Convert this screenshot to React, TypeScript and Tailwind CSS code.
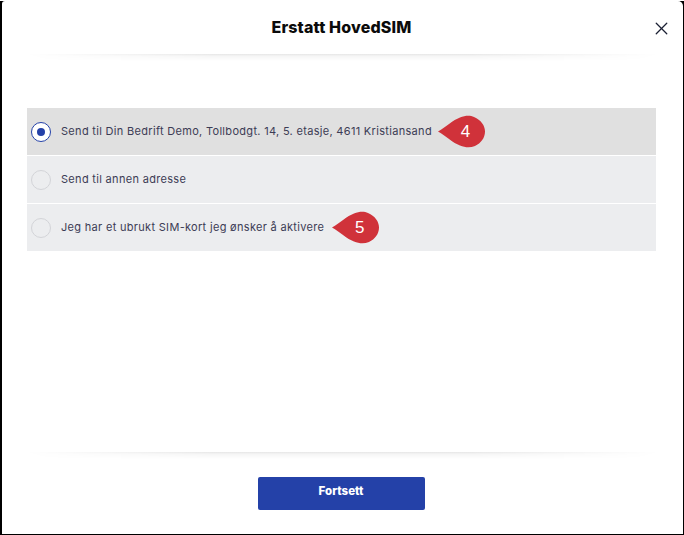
import React from 'react';
import { X } from 'lucide-react';

const options = [
    { label: 'Send til Din Bedrift Demo, Tollbodgt. 14, 5. etasje, 4611 Kristiansand', selected: true, pin: '4', gap: 'ml-[6px]' },
    { label: 'Send til annen adresse', selected: false, pin: null, gap: '' },
    { label: 'Jeg har et ubrukt SIM-kort jeg ønsker å aktivere', selected: false, pin: '5', gap: 'ml-[8px]' },
];

const Pin: React.FC<{ n: string }> = ({ n }) => (
    <div className="relative w-[47px] h-[33px] shrink-0">
        <svg width="47" height="33" viewBox="0 0 47 33" className="block">
            <path d="M0 16.5 C8 12 15 5 22 2.5 C27 0.5 32 0 36 2 C43 5 47 10.5 47 16.5 C47 23 43 28 37 31 C32 33 27 32.5 22 30.5 C15 28 8 21 0 16.5 Z" fill="#d0323a" />
        </svg>
        <span className="absolute left-[19px] top-0 w-[17px] h-[33px] flex items-center justify-center text-[17px] text-white font-['Liberation_Sans',sans-serif]">{n}</span>
    </div>
);

const Divider: React.FC = () => (
    <div className="h-[8px] mx-[24px] bg-[linear-gradient(to_bottom,#e6e6e6_0px,#f5f5f5_2px,#ffffff_7px)] [mask-image:linear-gradient(to_right,transparent,black_30%,black_70%,transparent)]" />
);

export default function App() {
    return (
        <div className="w-[684px] h-[535px] bg-black font-['Inter',sans-serif]">
            <div className="w-[681px] h-[533px] ml-[2px] mt-px rounded-tr-[5px] rounded-tl-[3px] bg-white flex flex-col">
                {/* Header */}
                <div className="h-[53px] shrink-0 relative flex items-center justify-center pb-[1px] pr-[2px]">
                    <h1 className="text-[16px] font-extrabold text-[#0b0b0b] tracking-[0.15px] leading-none">Erstatt HovedSIM</h1>
                    <button className="absolute left-[649px] top-[17px] text-[#1a2033]">
                        <X size={21} strokeWidth={1.5} className="block" />
                    </button>
                </div>
                <Divider />

                {/* Options */}
                <div className="flex-1 px-[25px] pt-[46px]">
                    <div className="w-[629px] flex flex-col gap-px">
                        {options.map(o => (
                            <div key={o.label} className={`h-[47px] flex items-center pl-[4px] ${o.selected ? 'bg-[#e0e0e0]' : 'bg-[#ecedef]'}`}>
                                <span className={`w-[20px] h-[20px] rounded-full border flex items-center justify-center shrink-0 ${o.selected ? 'border-[#2441a8] bg-white' : 'border-[#d3d4d8] bg-[#ecedef]'}`}>
                                    {o.selected && <span className="w-[8px] h-[8px] rounded-full bg-[#2441a8]" />}
                                </span>
                                <span className="ml-[10px] text-[11px] text-[#3c3c55] tracking-[0.31px] whitespace-nowrap">{o.label}</span>
                                {o.pin && <div className={o.gap}><Pin n={o.pin} /></div>}
                            </div>
                        ))}
                    </div>
                </div>

                <Divider />

                {/* Footer */}
                <div className="h-[74px] shrink-0 flex justify-center pt-[17px] pr-[3px]">
                    <button className="w-[167px] h-[33px] rounded-[2px] bg-[#2441a8] text-white text-[11.5px] font-extrabold pb-[4px]">Fortsett</button>
                </div>
            </div>
        </div>
    );
}
